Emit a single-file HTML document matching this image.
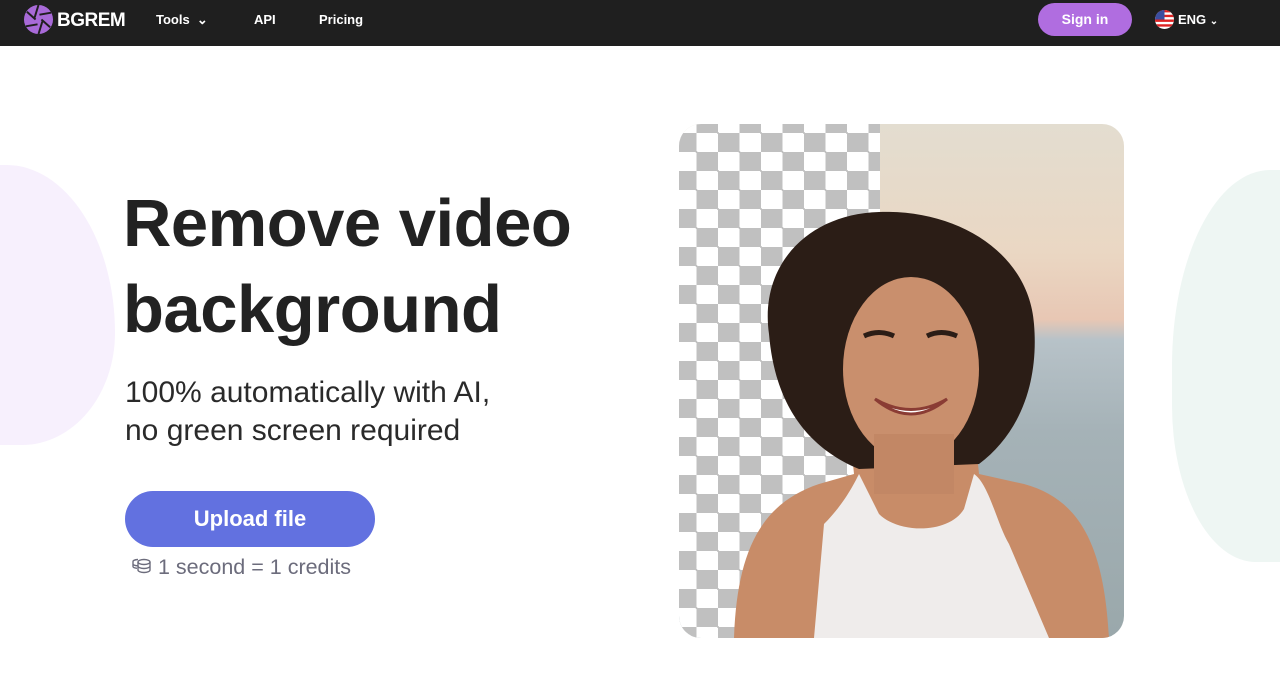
<!DOCTYPE html>
<html><head><meta charset="utf-8"><style>
*{margin:0;padding:0;box-sizing:border-box}
body{width:1280px;height:698px;overflow:hidden;background:#fff;font-family:"Liberation Sans",sans-serif;position:relative}
.nav{position:absolute;left:0;top:0;width:1280px;height:46px;background:#1f1f1f;color:#fff;font-weight:bold;font-size:13px}
.nav span{position:absolute;top:12px}
.sign{position:absolute;left:1038px;top:3px;width:94px;height:33px;border-radius:17px;background:#b06de0;color:#fff;font-size:14px;text-align:center;line-height:33px;font-weight:bold}
h1{position:absolute;left:123px;top:181px;font-size:67px;line-height:86px;color:#222;font-weight:bold;letter-spacing:-0.5px}
.sub{position:absolute;left:125px;top:374px;font-size:30px;line-height:38px;color:#2a2a2a}
.btn{position:absolute;left:125px;top:491px;width:250px;height:56px;border-radius:28px;background:#6271e0;color:#fff;font-weight:bold;font-size:22px;text-align:center;line-height:56px}
.cred{position:absolute;left:158px;top:555px;font-size:21.5px;color:#6c6c7c}
.panel{position:absolute;left:679px;top:124px;width:445px;height:514px;border-radius:22px;overflow:hidden;
background:linear-gradient(180deg,#e3ddd0 0%,#ead7c3 25%,#e8c7b4 38%,#b7c2c8 42%,#a5b2b7 60%,#9aa8ab 100%)}
.check{position:absolute;left:0;top:0;width:201px;height:514px;background-color:#fff;
background-image:linear-gradient(45deg,#c0c0c0 25%,transparent 25%,transparent 75%,#c0c0c0 75%),linear-gradient(45deg,#c0c0c0 25%,transparent 25%,transparent 75%,#c0c0c0 75%);
background-size:43px 38px;background-position:-4px -10px,17.5px 9px}
</style></head><body>
<div style="position:absolute;left:-40px;top:165px;width:155px;height:280px;background:#f7f0fd;border-radius:0 70% 60% 0/0 60% 40% 0"></div>
<div style="position:absolute;left:1172px;top:170px;width:140px;height:392px;background:#eef6f3;border-radius:70% 0 0 60%/50% 0 0 40%"></div>
<div class="nav">
<svg style="position:absolute;left:23px;top:4px" width="31" height="31" viewBox="0 0 32 32"><circle cx="16" cy="16" r="15" fill="#a86ad8"/><g stroke="#1f1f1f" stroke-width="2" fill="none"><path d="M16 1 L12 14"/><path d="M29 9 L17 11"/><path d="M28 24 L19 16"/><path d="M16 31 L20 18"/><path d="M3 23 L15 21"/><path d="M4 8 L13 16"/></g></svg>
<span style="left:57px;top:10px;font-size:19px;letter-spacing:-0.5px">BGREM</span>
<span style="left:156px">Tools &nbsp;⌄</span>
<span style="left:254px">API</span>
<span style="left:319px">Pricing</span>
<div class="sign">Sign in</div>
<svg style="position:absolute;left:1155px;top:10px" width="19" height="19" viewBox="0 0 20 20"><defs><clipPath id="c"><circle cx="10" cy="10" r="10"/></clipPath></defs><g clip-path="url(#c)"><rect width="20" height="20" fill="#fff"/><rect y="0" width="20" height="2.5" fill="#d22"/><rect y="5" width="20" height="2.5" fill="#d22"/><rect y="10" width="20" height="2.5" fill="#d22"/><rect y="15" width="20" height="2.5" fill="#d22"/><rect width="10" height="10" fill="#3b4ea0"/></g></svg>
<span style="left:1178px">ENG <span style="position:static;font-size:10px">⌄</span></span>
</div>
<h1>Remove video<br>background</h1>
<div class="sub">100% automatically with AI,<br>no green screen required</div>
<div class="btn">Upload file</div>
<svg style="position:absolute;left:132px;top:556px" width="20" height="18" viewBox="0 0 20 18" fill="none" stroke="#6c6c7c" stroke-width="1.4"><ellipse cx="12" cy="6" rx="6" ry="2.5"/><path d="M6 6v8c0 1.4 2.7 2.5 6 2.5s6-1.1 6-2.5V6M6 10c0 1.4 2.7 2.5 6 2.5s6-1.1 6-2.5"/><path d="M6 3.5C3 3.7 1 4.5 1 5.5v5c0 .8 1.5 1.5 4 1.8M1 8c0 .8 1.8 1.6 4.5 1.8"/></svg>
<div class="cred">1 second = 1 credits</div>
<div class="panel">
<div class="check"></div>
<svg style="position:absolute;left:0;top:0" width="445" height="514">
<path d="M55 514 C58 430 80 380 140 360 L175 350 L170 300 L295 300 L300 350 L345 360 C400 375 425 420 430 514 Z" fill="#c88c68"/>
<path d="M135 514 L145 400 C165 380 175 360 180 350 L200 390 C220 410 270 410 285 385 L295 350 C310 360 318 400 330 420 L370 514 Z" fill="#efeceb"/>
<path d="M90 210 C80 140 130 90 200 88 C280 85 350 130 355 200 C360 260 340 310 300 340 L180 345 C120 320 95 270 90 210Z" fill="#2b1d16"/>
<ellipse cx="232" cy="245" rx="68" ry="92" fill="#c98f6d"/>
<rect x="195" y="310" width="80" height="60" fill="#c28765"/>
<path d="M196 275 Q232 305 268 275 Q232 296 196 275Z" fill="#fff" stroke="#8a3c34" stroke-width="3"/>
<path d="M185 212 Q200 205 215 212" stroke="#2b1d16" stroke-width="5" fill="none"/><path d="M248 212 Q262 205 278 212" stroke="#2b1d16" stroke-width="5" fill="none"/>
</svg>
</div>
</body></html>
